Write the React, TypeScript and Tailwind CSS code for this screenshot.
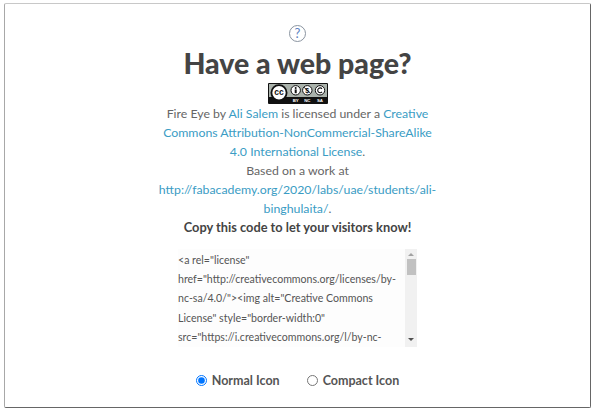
const code = `<a rel="license"
href="http://creativecommons.org/licenses/by-
nc-sa/4.0/"><img alt="Creative Commons
License" style="border-width:0"
src="https://i.creativecommons.org/l/by-nc-
sa/4.0/88x31.png" /></a>`;

function Badge() {
  return (
    <svg width="60" height="21" viewBox="0 0 60 21" className="block">
      <rect x="0" y="0" width="60" height="21" rx="1" fill="#111" />
      <rect x="1" y="1" width="58" height="13" fill="#aab2ab" />
      <circle cx="11" cy="9.7" r="7.6" fill="#fff" stroke="#111" strokeWidth="1.8" />
      <text x="11" y="12.4" textAnchor="middle" fontSize="8.5" fontWeight="700" fill="#111" fontFamily="Liberation Sans, sans-serif">cc</text>
      <circle cx="27.7" cy="7.3" r="4.7" fill="#fff" stroke="#111" strokeWidth="1" />
      <circle cx="27.7" cy="5.1" r="1" fill="#111" />
      <rect x="26.7" y="6.4" width="2" height="3.8" fill="#111" />
      <circle cx="39.3" cy="7.3" r="4.7" fill="#fff" stroke="#111" strokeWidth="1" />
      <text x="39.3" y="9.8" textAnchor="middle" fontSize="7" fontWeight="700" fill="#111" fontFamily="Liberation Sans, sans-serif">$</text>
      <path d="M36 4.3 L42.6 10.3" stroke="#111" strokeWidth="0.9" />
      <circle cx="52" cy="7.3" r="4.7" fill="#fff" stroke="#111" strokeWidth="1" />
      <path d="M54 5.8 A2.4 2.4 0 1 0 54 8.8" fill="none" stroke="#111" strokeWidth="1.1" />
      <g fontFamily="Liberation Sans, sans-serif" fontSize="4.4" fontWeight="700" fill="#fff" textAnchor="middle">
        <text x="27.7" y="19">BY</text>
        <text x="39.3" y="19">NC</text>
        <text x="52" y="19">SA</text>
      </g>
    </svg>
  );
}

export default function App() {
  return (
    <div className="w-[600px] h-[414px] bg-white pt-[3px] pl-1 pr-[9px] pb-[6px] font-['Lato',sans-serif] overflow-hidden">
      <div className="h-full rounded-[2px] border border-t-[#c8c8c8] border-l-[#a8a8a8] border-r-[#666] border-b-[#666] flex flex-col items-center pt-[21px]">
        <div className="w-[17px] h-[17px] shrink-0 rounded-full border border-[#8a94a0] flex items-center justify-center text-[13px] leading-none text-[#5b82c0]">
          ?
        </div>
        <h1 className="mt-[1px] text-[28.5px] leading-[41px] h-[40px] shrink-0 font-black text-[#444]">Have a web page?</h1>
        <div className="shrink-0"><Badge /></div>
        <div className="w-[300px] shrink-0 text-center text-[12.3px] leading-[19px] text-[#666] whitespace-nowrap">
          <p>
            Fire Eye by <a className="text-[#3a9cc4]">Ali Salem</a> is licensed under a{" "}
            <a className="text-[#3a9cc4]">
              Creative
              <br />
              Commons Attribution-NonCommercial-ShareAlike
              <br />
              4.0 International License
            </a>
            .
          </p>
          <p>Based on a work at</p>
          <p>
            <a className="text-[#3a9cc4]">
              http://fabacademy.org/2020/labs/uae/students/ali-
              <br />
              binghulaita/
            </a>
            .
          </p>
          <p className="font-bold text-[12.8px] text-[#444]">Copy this code to let your visitors know!</p>
        </div>
        <div className="mt-[12px] w-[239px] h-[98px] shrink-0 flex bg-[#fdfdfd]">
          <textarea
            readOnly
            value={code}
            wrap="off"
            className="flex-1 min-w-0 resize-none bg-transparent pl-0 pt-[2px] text-[10.6px] leading-[19.2px] text-[#555] outline-none overflow-hidden"
          />
          <div className="w-[12px] bg-[#f1f1f1] flex flex-col items-center pt-[4px] pb-[6px]">
            <div className="w-0 h-0 border-x-[3px] border-x-transparent border-b-[3px] border-b-[#a3a3a3]" />
            <div className="mt-[3px] w-[9px] h-[16px] bg-[#c1c1c1]" />
            <div className="mt-auto w-0 h-0 border-x-[3px] border-x-transparent border-t-[3px] border-t-[#505050]" />
          </div>
        </div>
        <div className="mt-[26px] flex items-center text-[12.5px] leading-[15px] font-bold text-[#555]">
          <label className="flex items-center gap-[5px]">
            <input type="radio" name="icon" defaultChecked className="w-[11px] h-[11px] m-0 accent-[#0075ff]" />
            Normal Icon
          </label>
          <label className="flex items-center gap-[5px] ml-[27px]">
            <input type="radio" name="icon" className="w-[11px] h-[11px] m-0" />
            Compact Icon
          </label>
        </div>
      </div>
    </div>
  );
}
